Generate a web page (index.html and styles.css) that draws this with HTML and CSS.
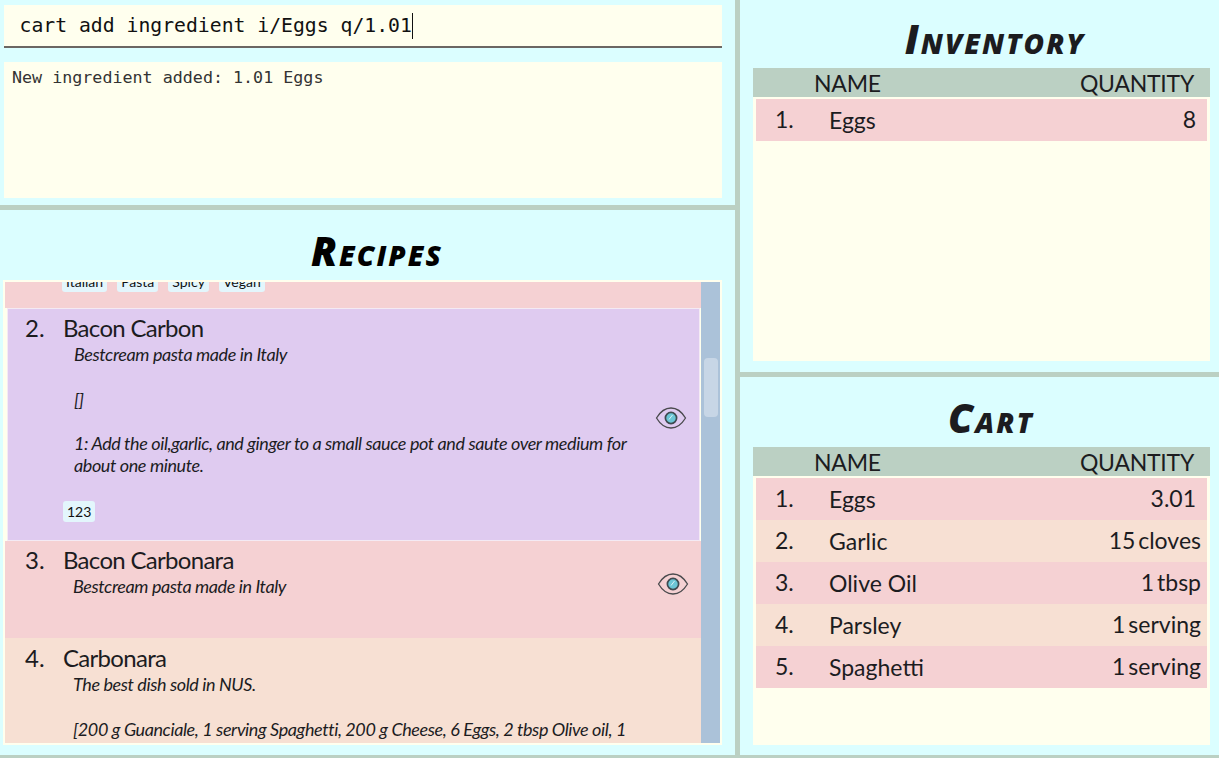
FILE: index.html
```html
<!DOCTYPE html>
<html lang="en">
<head>
    <meta charset="utf-8">
    <title>Recipe App</title>
    <link rel="stylesheet" href="styles.css">
</head>
<body>
<svg class="icon-defs" width="0" height="0">
    <symbol id="eye" viewBox="0 0 32 24">
        <path d="M1.5 12 C6 4.5 11 2 16 2 C21 2 26 4.5 30.5 12 C26 19.5 21 22 16 22 C11 22 6 19.5 1.5 12 Z" fill="none" stroke="#4a4a4d" stroke-width="1.3"/>
        <circle cx="16" cy="12" r="5.6" fill="#6cc6d6" stroke="#3f4a50" stroke-width="1.7"/>
        <path d="M14 13.5 L17.5 9" stroke="#d8f2f6" stroke-width="1"/>
    </symbol>
</svg>

<div class="app">
    <div class="col">
        <section class="panel command-panel">
            <div class="command-box"><span class="command-text">cart add ingredient i/Eggs q/1.01</span><span class="caret"></span></div>
            <div class="result-box">New ingredient added: 1.01 Eggs</div>
        </section>

        <section class="panel recipes-panel">
            <h2 class="title title-recipes">Recipes</h2>
            <div class="recipe-list">
                <div class="recipe-rows">
                    <div class="recipe clipped pink">
                        <div class="tags">
                            <span class="tag">Italian</span>
                            <span class="tag">Pasta</span>
                            <span class="tag">Spicy</span>
                            <span class="tag">Vegan</span>
                        </div>
                    </div>

                    <div class="recipe selected">
                        <div class="recipe-body">
                            <div class="recipe-head"><span class="num">2.</span><span class="name">Bacon Carbon</span></div>
                            <p class="desc">Bestcream pasta made in Italy

[]

1: Add the oil,garlic, and ginger to a small sauce pot and saute over medium for
about one minute.</p>
                            <div class="tags tags-own"><span class="tag">123</span></div>
                        </div>
                        <svg class="eye"><use href="#eye"/></svg>
                    </div>

                    <div class="recipe pink short">
                        <div class="recipe-body">
                            <div class="recipe-head"><span class="num">3.</span><span class="name">Bacon Carbonara</span></div>
                            <p class="desc">Bestcream pasta made in Italy</p>
                        </div>
                        <svg class="eye"><use href="#eye"/></svg>
                    </div>

                    <div class="recipe peach">
                        <div class="recipe-body">
                            <div class="recipe-head"><span class="num">4.</span><span class="name">Carbonara</span></div>
                            <p class="desc">The best dish sold in NUS.

[200 g Guanciale, 1 serving Spaghetti, 200 g Cheese, 6 Eggs, 2 tbsp Olive oil, 1</p>
                        </div>
                    </div>
                </div>
                <div class="scrollbar"><div class="thumb"></div></div>
            </div>
        </section>
    </div>

    <div class="col">
        <section class="panel inventory-panel">
            <h2 class="title title-inventory">Inventory</h2>
            <div class="table-head"><span>NAME</span><span>QUANTITY</span></div>
            <div class="table-rows">
                <div class="row pink"><span class="row-num">1.</span><span class="row-name">Eggs</span><span class="row-qty inset">8</span></div>
            </div>
        </section>

        <section class="panel cart-panel">
            <h2 class="title title-cart">Cart</h2>
            <div class="table-head"><span>NAME</span><span>QUANTITY</span></div>
            <div class="table-rows">
                <div class="row pink"><span class="row-num">1.</span><span class="row-name">Eggs</span><span class="row-qty inset">3.01</span></div>
                <div class="row peach"><span class="row-num">2.</span><span class="row-name">Garlic</span><span class="row-qty">15 cloves</span></div>
                <div class="row pink"><span class="row-num">3.</span><span class="row-name">Olive Oil</span><span class="row-qty">1 tbsp</span></div>
                <div class="row peach"><span class="row-num">4.</span><span class="row-name">Parsley</span><span class="row-qty">1 serving</span></div>
                <div class="row pink"><span class="row-num">5.</span><span class="row-name">Spaghetti</span><span class="row-qty">1 serving</span></div>
            </div>
        </section>
    </div>
</div>
</body>
</html>
```

FILE: styles.css
```css
body {
    margin: 0;
    font-family: 'Lato', sans-serif;
    color: #1c1c1f;
    background: #bbd0c3;
}

.icon-defs {
    display: block;
}

.app {
    display: grid;
    grid-template-columns: 735px 479px;
    column-gap: 5px;
    height: 755px;
    padding-bottom: 3px;
    overflow: hidden;
}

.col {
    display: flex;
    flex-direction: column;
    row-gap: 5px;
    min-height: 0;
}

.panel {
    background: #dbfeff;
    box-sizing: border-box;
}

/* command box + result */
.command-panel {
    height: 205px;
    padding: 5px 13px 7px 4px;
}

.command-box {
    display: flex;
    align-items: center;
    height: 41px;
    padding-left: 15.5px;
    background: #ffffee;
    border-bottom: 2px solid #6b6763;
    font-family: 'DejaVu Sans Mono', monospace;
    font-size: 19.75px;
    color: #111;
}

.caret {
    width: 1px;
    height: 26px;
    background: #111;
}

.result-box {
    height: 136px;
    box-sizing: border-box;
    margin-top: 14px;
    padding: 5px 8px;
    background: #ffffee;
    font-family: 'DejaVu Sans Mono', monospace;
    font-size: 16.7px;
    color: #333;
}

/* titles */
.title {
    margin: 0;
    text-align: center;
    font-family: 'Open Sans', sans-serif;
    font-weight: 800;
    font-style: italic;
    font-variant: small-caps;
    font-size: 40px;
    line-height: 40px;
    letter-spacing: 2px;
}

.title-recipes {
    color: #000;
    padding-left: 29px;
}

.title-inventory {
    padding-left: 27px;
}

.title-cart {
    padding-left: 19px;
}

/* recipes */
.recipes-panel {
    flex: 1;
    min-height: 0;
    padding: 21px 13px 10px 3px;
    display: flex;
    flex-direction: column;
}

.recipes-panel .title {
    margin-bottom: 9px;
}

.recipe-list {
    flex: 1;
    min-height: 0;
    display: flex;
    padding: 2px;
    background: #ffffee;
}

.recipe-rows {
    flex: 1;
    min-width: 0;
    overflow: hidden;
}

.recipe {
    display: flex;
    align-items: center;
    box-sizing: border-box;
    padding-left: 20px;
    padding-right: 12px;
}

.recipe-body {
    flex: 1;
    align-self: flex-start;
    padding-top: 7px;
}

.pink {
    background: #f5d1d3;
}

.peach {
    background: #f7e0d3;
}

.clipped {
    height: 26px;
    align-items: flex-end;
    padding-left: 57px;
    padding-bottom: 16px;
    overflow: hidden;
}

.selected {
    height: 233px;
    margin-left: 2px;
    margin-right: 1px;
    padding-left: 17px;
    padding-right: 12px;
    background: #dfcbf0;
    border: 1px solid #f4eaf4;
}

.selected .recipe-body,
.short .recipe-body {
    padding-top: 6px;
}

.selected .desc {
    margin-left: 49px;
    line-height: 22.3px;
}

.short {
    height: 97px;
}

.peach.recipe {
    height: 110px;
}

.recipe-head {
    display: flex;
    font-size: 24px;
    line-height: 26px;
    letter-spacing: -0.7px;
}

.num {
    width: 38px;
    letter-spacing: 0;
}

.desc {
    margin: 2px 0 0 48px;
    font-style: italic;
    font-size: 18px;
    line-height: 22.5px;
    letter-spacing: -0.4px;
    white-space: pre-line;
}

.tags {
    display: flex;
    column-gap: 10px;
}

.tags-own {
    margin: 24px 0 0 38px;
}

.tag {
    padding: 2px 4px;
    background: #e3f6fc;
    border-radius: 3px;
    font-size: 14px;
    line-height: 17px;
    color: #111;
}

.eye {
    flex: none;
    width: 32px;
    height: 24px;
    margin-bottom: 13px;
}

.short .eye {
    margin-bottom: 11px;
}

.scrollbar {
    flex: none;
    width: 19px;
    background: #abc2d9;
}

.thumb {
    width: 14px;
    height: 59px;
    margin: 76px 0 0 3px;
    background: #c7d6e6;
    border-radius: 4px;
}

/* inventory + cart tables */
.inventory-panel {
    height: 372px;
    padding: 19px 9px 11px 13px;
    display: flex;
    flex-direction: column;
}

.cart-panel {
    flex: 1;
    min-height: 0;
    padding: 21px 9px 10px 13px;
    display: flex;
    flex-direction: column;
}

.inventory-panel .title,
.cart-panel .title {
    margin-bottom: 9px;
}

.table-head {
    display: flex;
    justify-content: space-between;
    height: 29px;
    padding: 0 16px 0 61px;
    background: #bbd0c3;
    font-size: 23px;
    line-height: 30px;
    letter-spacing: -0.25px;
    flex: none;
}

.table-rows {
    flex: 1;
    min-height: 0;
    padding: 2px 3px;
    background: #ffffee;
}

.row {
    display: flex;
    align-items: center;
    box-sizing: border-box;
    height: 42px;
    padding-bottom: 1px;
    font-size: 23px;
}

.row-num {
    width: 73px;
    padding-left: 19px;
    box-sizing: border-box;
    margin-bottom: 2px;
}

.row-name {
    flex: 1;
}

.row-qty {
    padding-right: 6px;
    margin-bottom: 2px;
    word-spacing: -3px;
}

.inset {
    padding-right: 11px;
}
```
